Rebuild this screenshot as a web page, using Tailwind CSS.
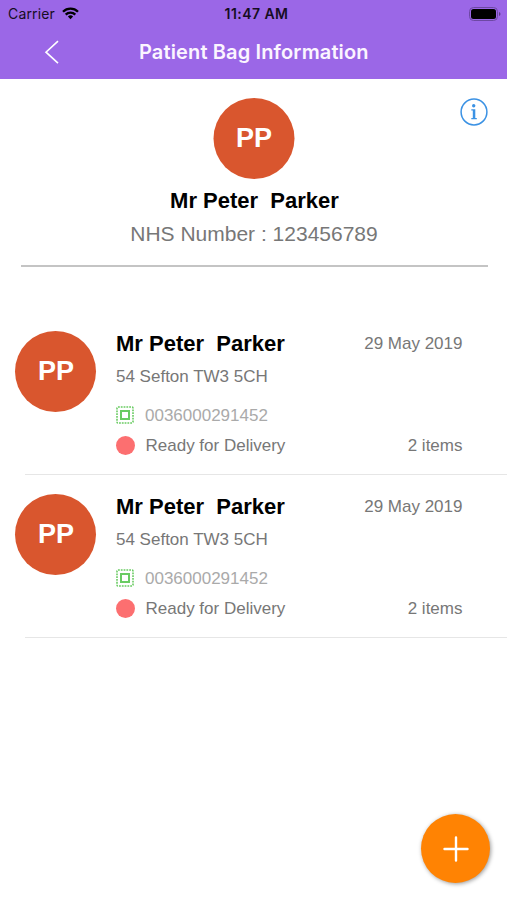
<!DOCTYPE html>
<html lang="en">
<head>
<meta charset="utf-8">
<title>Patient Bag Information</title>
<script src="https://cdn.jsdelivr.net/npm/@tailwindcss/browser@4"></script>
</head>
<body class="bg-white">
<div class="relative flex h-[900px] w-[507px] flex-col overflow-hidden bg-white font-['Liberation_Sans',sans-serif]">
  <header class="h-[79px] shrink-0 bg-[#9b67e7] font-[Inter,sans-serif]">
    <div class="grid h-[27px] grid-cols-3 items-center pl-[8px] pr-[6px] text-[14px] text-[#160d22]">
      <div class="flex items-center gap-[7px]">
        <span class="tracking-[0.15px]">Carrier</span>
        <svg class="h-[13px] w-[17px]" viewBox="0 0 17 13" fill="none" stroke="#000" stroke-width="2.3"><path d="M1 4.800a10.600 10.600 0 0 1 15 0M3.700 7.600a6.800 6.800 0 0 1 9.600 0"/><path d="M8.500 12.200L5.900 9.600a3.700 3.700 0 0 1 5.200 0z" fill="#000" stroke="none"/></svg>
      </div>
      <span class="pl-[4px] text-center font-semibold whitespace-nowrap text-[14px] tracking-[0.450px]">11:47 AM</span>
      <svg class="h-[14px] w-[32px] justify-self-end" viewBox="0 0 32 14"><rect x=".5" y=".5" width="28" height="13" rx="4" fill="none" stroke="#6d48a3"/><rect x="2" y="2" width="25" height="10" rx="2.500" fill="#000"/><path d="M30 5v4q1.500-.5 1.500-2T30 5z" fill="#5c3d8a"/></svg>
    </div>
    <div class="flex h-[52px] items-start">
      <svg class="ml-[44px] mt-[13px] h-[24px] w-[16px]" viewBox="0 0 16 24" fill="none" stroke="#fff" stroke-width="1.600"><path d="M14 1.200L2 12.200l12 11"/></svg>
      <h1 class="ml-[79px] mt-[10px] text-[20px] leading-[30px] font-semibold tracking-[0.140px] whitespace-nowrap text-[#fbf5ff]">Patient Bag Information</h1>
    </div>
  </header>

  <section class="relative ml-[21px] mr-[19px] flex h-[188px] shrink-0 flex-col items-center border-b-2 border-[#c4c4c4] pt-[19px]">
    <div class="flex size-[81px] -translate-x-[0.500px] items-center justify-center rounded-full bg-[#d9562e] text-[27px] font-bold text-white">PP</div>
    <h2 class="mt-[9px] text-[22px] leading-[26px] font-bold whitespace-pre text-black">Mr Peter  Parker</h2>
    <p class="mt-[7px] pr-px text-[21px] leading-[26px] whitespace-nowrap text-[#777]">NHS Number : 123456789</p>
    <svg class="absolute right-0 top-[19px] size-[28px]" viewBox="0 0 28 28"><circle cx="14" cy="14" r="12.900" fill="none" stroke="#3b92e4" stroke-width="1.500"/><circle cx="13.700" cy="7.700" r="1.700" fill="#3b92e4"/><path d="M11.300 11.300h4v8.700h1.500v1.200h-5.500V20h1.500v-7.500h-1.500z" fill="#3b92e4"/></svg>
  </section>

  <main class="pt-[45px]">
    <article class="flex h-[162px] pl-[15.400px] pt-[19px]">
      <div class="flex size-[81px] shrink-0 items-center justify-center rounded-full bg-[#d9562e] text-[27px] font-bold text-white">PP</div>
      <div class="ml-[19.600px] w-[346.500px] text-[17px] leading-[20px] text-[#777]">
        <div class="flex items-center justify-between"><h3 class="text-[22px] leading-[26px] font-bold whitespace-pre text-black">Mr Peter  Parker</h3><span>29 May 2019</span></div>
        <p class="mt-[10px]">54 Sefton TW3 5CH</p>
        <div class="mt-[19px] flex items-center text-[#aaa]">
          <svg class="-mt-[2px] mr-[11px] size-[18px]" viewBox="0 0 18 18" fill="none" stroke="#69cb62"><rect x="1" y="1" width="16" height="16" rx="1" stroke-width="1.600" stroke-dasharray="1.800 1"/><rect x="5" y="5" width="8" height="8" stroke-width="2"/></svg>
          <span>0036000291452</span>
        </div>
        <div class="mt-[10px] flex items-center"><span class="-mt-px mr-[10px] size-[19.500px] rounded-full bg-[#fc6f70]"></span><span>Ready for Delivery</span><span class="ml-auto">2 items</span></div>
      </div>
    </article>
    <div class="ml-[25px] h-px bg-[#e6e6e6]"></div>
    <article class="flex h-[162px] pl-[15.400px] pt-[19px]">
      <div class="flex size-[81px] shrink-0 items-center justify-center rounded-full bg-[#d9562e] text-[27px] font-bold text-white">PP</div>
      <div class="ml-[19.600px] w-[346.500px] text-[17px] leading-[20px] text-[#777]">
        <div class="flex items-center justify-between"><h3 class="text-[22px] leading-[26px] font-bold whitespace-pre text-black">Mr Peter  Parker</h3><span>29 May 2019</span></div>
        <p class="mt-[10px]">54 Sefton TW3 5CH</p>
        <div class="mt-[19px] flex items-center text-[#aaa]">
          <svg class="-mt-[2px] mr-[11px] size-[18px]" viewBox="0 0 18 18" fill="none" stroke="#69cb62"><rect x="1" y="1" width="16" height="16" rx="1" stroke-width="1.600" stroke-dasharray="1.800 1"/><rect x="5" y="5" width="8" height="8" stroke-width="2"/></svg>
          <span>0036000291452</span>
        </div>
        <div class="mt-[10px] flex items-center"><span class="-mt-px mr-[10px] size-[19.500px] rounded-full bg-[#fc6f70]"></span><span>Ready for Delivery</span><span class="ml-auto">2 items</span></div>
      </div>
    </article>
    <div class="ml-[25px] h-px bg-[#e6e6e6]"></div>
  </main>

  <button class="absolute left-[421px] top-[814px] flex size-[69px] items-center justify-center rounded-full bg-[#ff8303] shadow-[1px_1px_4px_rgba(0,0,0,0.4)]" aria-label="Add">
    <svg class="size-[26px]" viewBox="0 0 26 26" stroke="#fff" stroke-width="2.400" stroke-linecap="round"><path d="M13 1.500v23M1.500 13h23"/></svg>
  </button>
</div>
</body>
</html>
